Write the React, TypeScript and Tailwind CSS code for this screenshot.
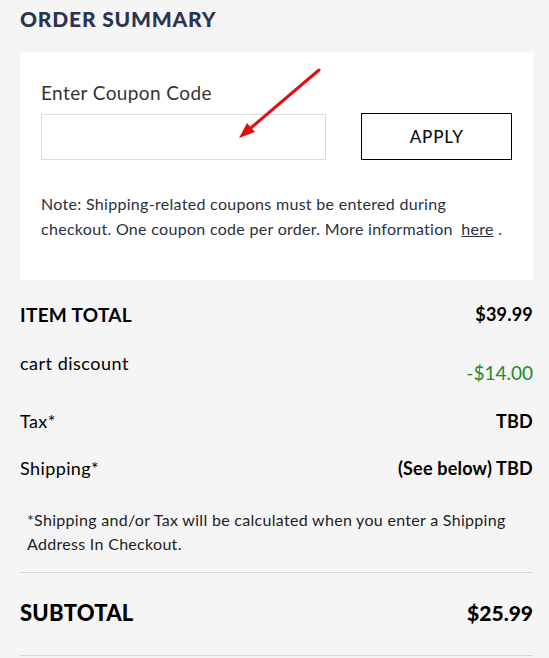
import React from "react"

const font = { fontFamily: "Lato, 'Open Sans', sans-serif" }

function Row({ label, value, bold }: { label: string; value: string; bold?: boolean }) {
  return (
    <div className="flex items-start justify-between">
      <span className={bold ? "font-bold text-[19px] tracking-[0.3px]" : "text-[18px] tracking-[0.4px]"}>{label}</span>
      <span className="font-bold text-[18px] tracking-[0.2px]">{value}</span>
    </div>
  )
}

export default function App() {
  return (
    <div className="w-[549px] h-[658px] bg-[#f5f5f5] text-black overflow-hidden" style={font}>
      <div className="pl-5 pr-4">
        <h2 className="pt-[5px] text-[21px] font-black tracking-[0.8px] text-[#2a3350] leading-[28px]">ORDER SUMMARY</h2>

        {/* Coupon card */}
        <div className="relative mt-[19px] bg-white px-[21px] pt-[29px] h-[228px]">
          <label className="block text-[19px] tracking-[0.4px] text-[#333] leading-[24px]">Enter Coupon Code</label>
          <div className="mt-[8px] flex items-center">
            <input className="h-[46px] w-[286px] border border-[#dcdcdc] bg-white outline-none" />
            <button className="ml-[35px] h-[47px] w-[151px] border-[1.5px] border-black text-[17px] font-medium tracking-[0.8px] text-[#111]">
              APPLY
            </button>
          </div>
          <p className="mt-[31px] w-[470px] text-[16px] tracking-[0.3px] leading-[25px] text-[#2b3040]">
            Note: Shipping-related coupons must be entered during checkout. One coupon code per order. More information{" "}
            <span className="whitespace-nowrap"><span className="ml-1 underline">here</span> .</span>
          </p>
          <svg className="pointer-events-none absolute left-0 top-0" width="513" height="200" viewBox="0 0 513 200">
            <line x1="299" y1="18" x2="226" y2="80" stroke="#e01010" strokeWidth="3" strokeLinecap="round" />
            <polygon points="219,86 227,71 235,80" fill="#e01010" />
          </svg>
        </div>

        {/* Totals */}
        <div className="mt-[21px] flex flex-col">
          <div className="h-[49px]">
            <Row label="ITEM TOTAL" value="$39.99" bold />
          </div>
          <div className="h-[58px] flex items-start justify-between">
            <span className="text-[18px] tracking-[0.5px]">cart discount</span>
            <span className="mt-[9px] text-[19px] text-[#1f8a32]">-$14.00</span>
          </div>
          <div className="h-[47px]">
            <Row label="Tax*" value="TBD" />
          </div>
          <div className="h-[50px]">
            <Row label="Shipping*" value="(See below) TBD" />
          </div>
        </div>

        <p className="mt-[3px] px-[7px] w-[500px] text-[16px] tracking-[0.3px] leading-[24px] text-[#222]">
          *Shipping and/or Tax will be calculated when you enter a Shipping Address In Checkout.
        </p>

        <div className="mt-[16px] border-t border-[#d6d6d6]" />
        <div className="flex items-center justify-between h-[82px] pb-[3px]">
          <span className="text-[22px] font-black tracking-[0.2px]">SUBTOTAL</span>
          <span className="text-[21px] font-black">$25.99</span>
        </div>
        <div className="border-t border-[#d6d6d6]" />
      </div>
    </div>
  )
}
